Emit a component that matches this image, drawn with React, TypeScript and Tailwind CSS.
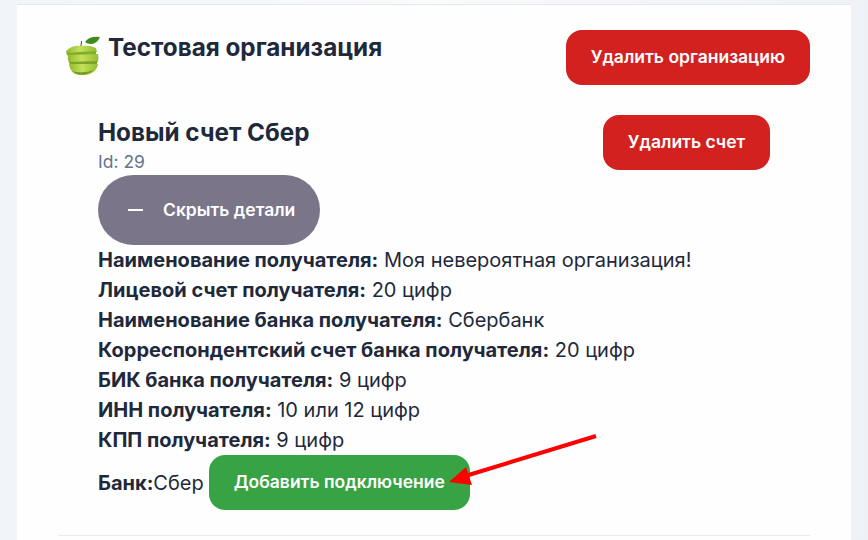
const FIELDS = [
  ['Наименование получателя:', 'Моя невероятная организация!'],
  ['Лицевой счет получателя:', '20 цифр'],
  ['Наименование банка получателя:', 'Сбербанк'],
  ['Корреспондентский счет банка получателя:', '20 цифр'],
  ['БИК банка получателя:', '9 цифр'],
  ['ИНН получателя:', '10 или 12 цифр'],
  ['КПП получателя:', '9 цифр'],
]

function AppleLogo() {
  return (
    <svg width="36" height="40" viewBox="0 0 36 40" className="shrink-0">
      <defs>
        <linearGradient id="skin" x1="0" x2="1" y1="0" y2="0">
          <stop offset="0" stopColor="#8fbb2c" />
          <stop offset="0.45" stopColor="#c4e05c" />
          <stop offset="1" stopColor="#94bf32" />
        </linearGradient>
      </defs>
      <path d="M16 10 L16.5 5" stroke="#5d4a1e" strokeWidth="1" />
      <path d="M20 6 Q24 0 35 1 Q32 8 26 8 Q22 8 20 6Z" fill="#3f8a1c" />
      <path d="M1 15 Q7 9 16 10 Q25 9 31 12 L32 16 L2 18Z" fill="url(#skin)" />
      <path d="M1 17 L31 15 L31 19 L3 20Z" fill="#7fae28" />
      <path d="M3 19 L33 18 Q34 22 33 26 L4 27 Q2 23 3 19Z" fill="url(#skin)" />
      <path d="M4 26 L32 25 L32 28 L5 29Z" fill="#7da426" />
      <path d="M4 28 L33 28 Q32 35 25 38 Q17 40 10 38 Q5 35 4 28Z" fill="url(#skin)" />
      <path d="M7 35 Q17 38 29 34 Q24 39 17 39 Q11 39 7 35Z" fill="#7c9e20" />
    </svg>
  )
}

export default function App() {
  return (
    <div className="h-[540px] w-[868px] overflow-hidden bg-gradient-to-r from-[#f1f5f9] via-[#f8fafc] to-[#eef1f6] px-[17px] pt-1 font-['Inter',sans-serif] text-[#1e293b]">
      <div className="relative h-[600px] border-t border-[#e2e8f0] bg-[#fefefe] px-[41px] pt-[25px]">
        {/* Organization */}
        <div className="flex items-start justify-between">
          <div className="flex items-start gap-[7px] pl-[7px] pt-[6px]">
            <AppleLogo />
            <h2 className="text-[24.25px] leading-[24px] font-bold">Тестовая организация</h2>
          </div>
          <button className="h-[55px] rounded-2xl bg-[#d2211e] px-[25px] text-[17.5px] font-semibold text-white">
            Удалить организацию
          </button>
        </div>

        {/* Account */}
        <div className="pt-[30px] pr-10 pl-10">
          <div className="flex items-start justify-between">
            <div className="pt-[2px]">
              <h3 className="text-[24.25px] leading-8 font-bold">Новый счет Сбер</h3>
              <p className="text-[17.5px] leading-[26px] text-[#64748b]">Id: 29</p>
            </div>
            <button className="h-[55px] w-[167px] rounded-2xl bg-[#d2211e] text-[17.5px] font-semibold text-white">
              Удалить счет
            </button>
          </div>

          <button className="flex h-[70px] w-[222px] items-center rounded-full bg-[#7a7589] pl-[30px] text-[17.5px] font-semibold text-white">
            <span className="h-0.5 w-[15px] bg-white" />
            <span className="ml-[20px]">Скрыть детали</span>
          </button>

          <div>
            {FIELDS.map(([label, value]) => (
              <p key={label} className="text-xl leading-[30px]">
                <span className="font-bold">{label}</span> {value}
              </p>
            ))}
          </div>

          <div className="flex items-center text-xl">
            <span className="font-bold">Банк:</span>
            <span>Сбер</span>
            <button className="ml-[5px] h-[55px] w-[261px] rounded-2xl bg-[#38a345] text-[17.5px] font-semibold text-white">
              Добавить подключение
            </button>
          </div>
        </div>

        <hr className="mt-[25px] border-[#e8ebef]" />

        {/* Annotation arrow */}
        <svg width="868" height="540" viewBox="0 0 868 540" className="pointer-events-none absolute top-[-5px] left-[-17px]">
          <path d="M596 436 L462 477" stroke="#fe0000" strokeWidth="4" />
          <path d="M449 482 L466 467 L472 485Z" fill="#fe0000" />
        </svg>
      </div>
    </div>
  )
}
